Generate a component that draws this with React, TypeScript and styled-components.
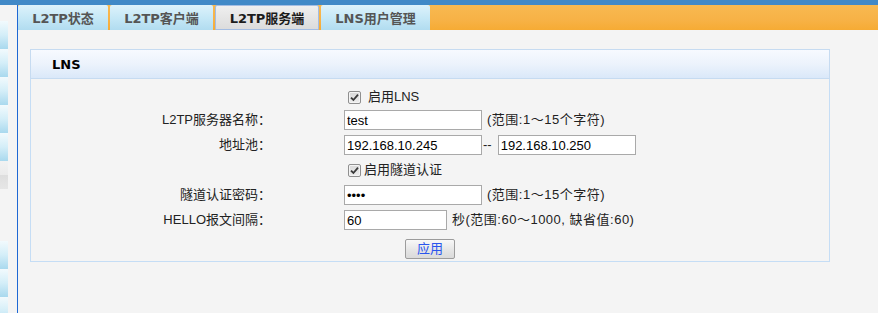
import React from 'react';
import styled, { createGlobalStyle } from 'styled-components';

const GlobalStyle = createGlobalStyle`
  html, body { margin: 0; padding: 0; background: #f4f4f4; }
  body {
    font-family: "Liberation Sans", "Noto Sans CJK SC", sans-serif;
    font-size: 13px;
    color: #222;
  }
  * { box-sizing: border-box; }
`;

const Page = styled.div`
  width: 878px;
  height: 313px;
  overflow: hidden;
  display: flex;
  flex-direction: column;
  background: #f4f4f4;
`;

const TopBar = styled.div`
  height: 5px;
  flex: none;
  background: #4189c7;
`;

const Body = styled.div`
  flex: 1;
  display: flex;
  min-height: 0;
`;

const Sidebar = styled.div`
  width: 18px;
  flex: none;
  padding-top: 16px;
  border-right: 1px solid #1f68d4;
  display: flex;
  flex-direction: column;
`;

const SideStrip = styled.div`
  width: 8px;
  height: 2px;
  background: #cde5f4;
`;

const SideItem = styled.div<{ $gray?: boolean }>`
  width: 8px;
  height: 28px;
  flex: none;
  background: ${(p) =>
    p.$gray
      ? 'linear-gradient(#f2f2f2, #ebebeb 50%, #dedede 51%, #e6e6e6)'
      : 'linear-gradient(#f2fafd, #d4eef8 50%, #a9d9ee)'};
`;

const SideGap = styled.div`
  height: 52px;
  flex: none;
`;

const Main = styled.div`
  flex: 1;
  display: flex;
  flex-direction: column;
  min-width: 0;
`;

const TabBar = styled.div`
  height: 25px;
  flex: none;
  display: flex;
  gap: 2px;
  background: linear-gradient(#f8b951, #f7b246 60%, #f6ab34);
`;

const Tab = styled.div<{ $w: number; $active?: boolean }>`
  width: ${(p) => p.$w}px;
  flex: none;
  display: flex;
  align-items: center;
  justify-content: center;
  font-family: "DejaVu Sans", "Noto Sans CJK SC", sans-serif;
  font-weight: bold;
  font-size: 13px;
  border-radius: 2px 2px 0 0;
  color: ${(p) => (p.$active ? '#1c1c1c' : '#555')};
  background: ${(p) =>
    p.$active
      ? 'linear-gradient(#efefef, #dcdcdc)'
      : 'linear-gradient(#ddf2fb, #c4e7f6 55%, #b1dcf0)'};
  border: ${(p) => (p.$active ? '1px solid #a3bde3' : 'none')};
`;

const Panel = styled.div`
  margin: 19px 48px 0 12px;
`;

const PanelHeader = styled.div`
  height: 30px;
  display: flex;
  align-items: center;
  padding-left: 21px;
  border: 1px solid #c6dbf1;
  background: linear-gradient(#f7faff, #ecf3fc 50%, #dae8f9);
  font-family: "DejaVu Sans", sans-serif;
  font-weight: bold;
  font-size: 13px;
  color: #000;
`;

const PanelBody = styled.div`
  border: 1px solid #c5ddf5;
  border-top: none;
  padding: 8px 0 2px;
  display: flex;
  flex-direction: column;
  gap: 5px;
`;

const Row = styled.div<{ $h?: number }>`
  height: ${(p) => p.$h ?? 20}px;
  display: grid;
  grid-template-columns: 240px 1fr;
  column-gap: 73px;
  align-items: center;
  line-height: 20px;
`;

const Label = styled.div`
  text-align: right;
  white-space: nowrap;
  color: #222;
`;

const Value = styled.div`
  display: flex;
  align-items: center;
  white-space: nowrap;
`;

const TextInput = styled.input<{ $w: number }>`
  width: ${(p) => p.$w}px;
  height: 20px;
  margin: 0;
  padding: 0 2px;
  border: 1px solid #a9a9a9;
  background: #fff;
  font-family: "Liberation Sans", sans-serif;
  font-size: 13px;
  color: #000;
  outline: none;
`;

const Dash = styled.span`
  padding: 0 6px 0 1px;
  color: #222;
`;

const Hint = styled.span`
  margin-left: 5px;
  letter-spacing: 0.5px;
  color: #222;
`;

const CheckBox = styled.span`
  width: 13px;
  height: 13px;
  margin: 0 3px 0 4px;
  flex: none;
  display: inline-flex;
  align-items: center;
  justify-content: center;
  border: 1px solid #8f8f8f;
  border-radius: 2px;
  background: linear-gradient(#d9d9d9, #eeeeee);
  box-shadow: inset 0 0 0 1px #f4f4f4;
`;

const CheckLabel = styled.span<{ $gap?: number }>`
  margin-left: ${(p) => p.$gap ?? 0}px;
  color: #222;
`;

const ButtonRow = styled.div`
  display: flex;
  justify-content: center;
  margin-top: 4px;
`;

const Button = styled.button`
  width: 50px;
  height: 20px;
  padding: 0;
  margin: 0;
  border: 1px solid #9c9c9c;
  border-radius: 2px;
  background: linear-gradient(#f8f8f8, #e4e4e4 60%, #dadada);
  font-family: "Liberation Sans", "Noto Sans CJK SC", sans-serif;
  font-size: 13px;
  line-height: 18px;
  color: #2a55ee;
`;

const Check = () => (
  <CheckBox>
    <svg width="9" height="9" viewBox="0 0 9 9">
      <path d="M1 4.6 L3.4 7 L8 1.6" fill="none" stroke="#3a3a3a" strokeWidth="1.8" />
    </svg>
  </CheckBox>
);

const tabs = [
  { label: 'L2TP状态', w: 90 },
  { label: 'L2TP客户端', w: 103 },
  { label: 'L2TP服务端', w: 104, active: true },
  { label: 'LNS用户管理', w: 109 },
];

export default function App() {
  return (
    <>
      <GlobalStyle />
      <Page>
        <TopBar />
        <Body>
          <Sidebar>
            <SideStrip />
            <SideItem />
            <SideItem />
            <SideItem />
            <SideItem />
            <SideItem />
            <SideItem $gray />
            <SideGap />
            <SideItem />
            <SideItem />
            <SideItem />
          </Sidebar>
          <Main>
            <TabBar>
              {tabs.map((t) => (
                <Tab key={t.label} $w={t.w} $active={t.active}>
                  {t.label}
                </Tab>
              ))}
            </TabBar>
            <Panel>
              <PanelHeader>LNS</PanelHeader>
              <PanelBody>
                <Row $h={18}>
                  <Label />
                  <Value>
                    <Check />
                    <CheckLabel $gap={4}>启用LNS</CheckLabel>
                  </Value>
                </Row>
                <Row>
                  <Label>L2TP服务器名称：</Label>
                  <Value>
                    <TextInput $w={138} value="test" readOnly />
                    <Hint>(范围:1～15个字符)</Hint>
                  </Value>
                </Row>
                <Row>
                  <Label>地址池：</Label>
                  <Value>
                    <TextInput $w={138} value="192.168.10.245" readOnly />
                    <Dash>--</Dash>
                    <TextInput $w={138} value="192.168.10.250" readOnly />
                  </Value>
                </Row>
                <Row>
                  <Label />
                  <Value>
                    <Check />
                    <CheckLabel>启用隧道认证</CheckLabel>
                  </Value>
                </Row>
                <Row>
                  <Label>隧道认证密码：</Label>
                  <Value>
                    <TextInput $w={138} type="password" value="1234" readOnly />
                    <Hint>(范围:1～15个字符)</Hint>
                  </Value>
                </Row>
                <Row>
                  <Label>HELLO报文间隔：</Label>
                  <Value>
                    <TextInput $w={103} value="60" readOnly />
                    <Hint>秒(范围:60～1000, 缺省值:60)</Hint>
                  </Value>
                </Row>
                <ButtonRow>
                  <Button>应用</Button>
                </ButtonRow>
              </PanelBody>
            </Panel>
          </Main>
        </Body>
      </Page>
    </>
  );
}
